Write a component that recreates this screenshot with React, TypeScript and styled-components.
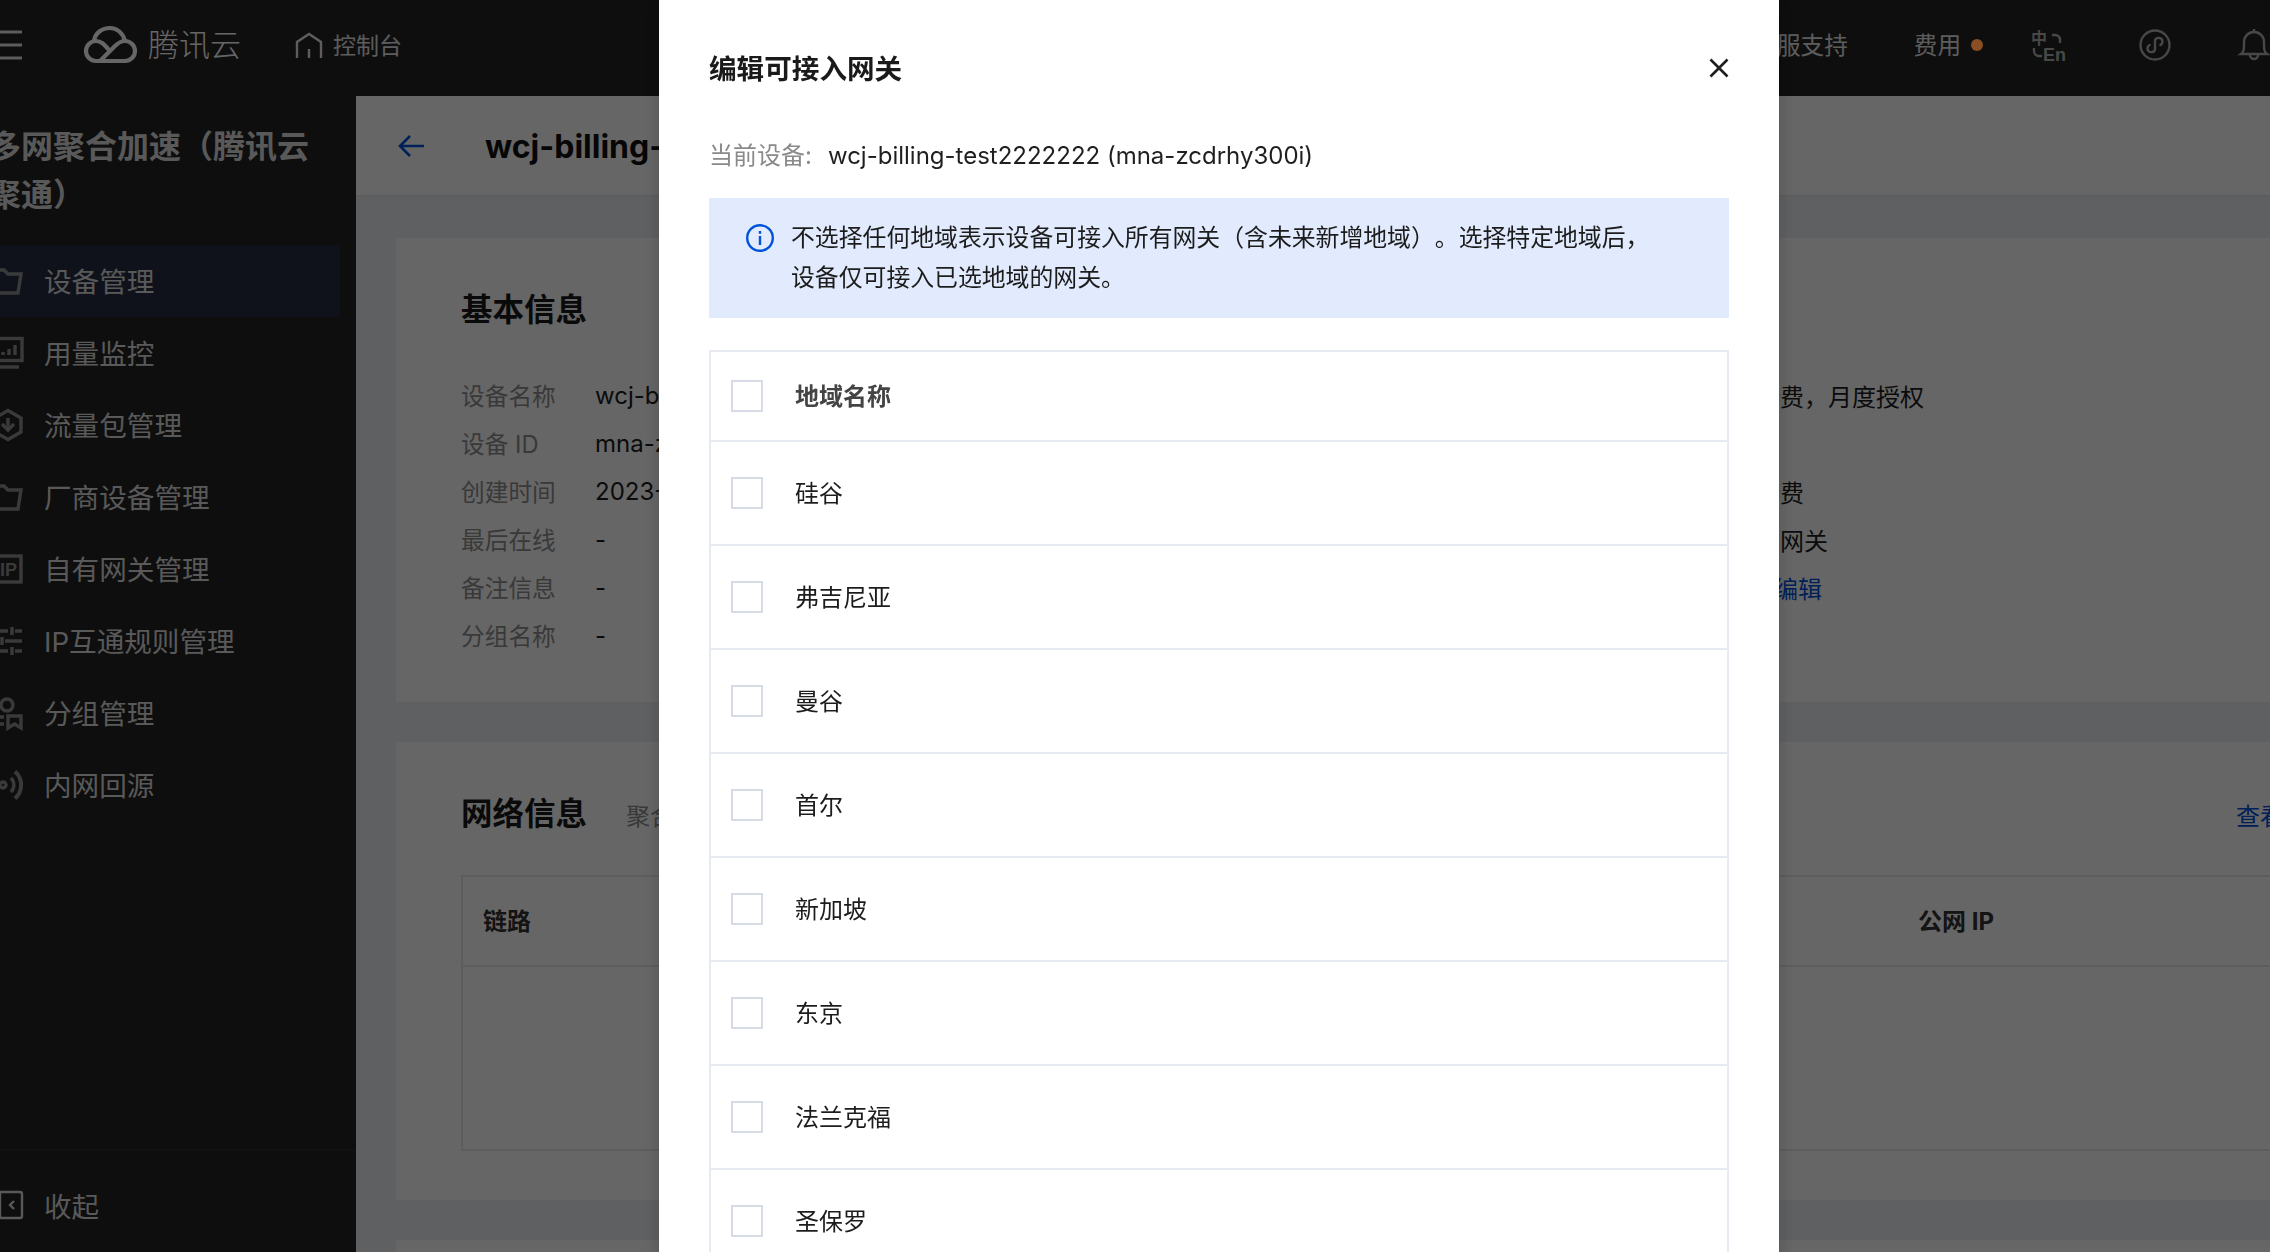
import React from "react";
import styled, { createGlobalStyle } from "styled-components";

const Global = createGlobalStyle`
  html, body { margin: 0; padding: 0; height: 100%; overflow: hidden; background: #232323; }
  body { font-family: Inter, "Noto Sans CJK SC", sans-serif; text-spacing-trim: space-all; }
  * { box-sizing: border-box; }
  svg { overflow: visible; }
`;

const Shell = styled.div`
  width: 2296px;
  height: 1252px;
  margin-left: -24px;
  display: flex;
  flex-direction: column;
  overflow: hidden;
`;

const TopBar = styled.header`
  flex: none;
  height: 96px;
  display: flex;
  align-items: center;
  padding: 0 3px 6px 14px;
  background: #232323;
  color: #fff;
`;

const Brand = styled.span`
  margin-left: 10px;
  font-size: 31px;
  font-weight: 300;
  line-height: 40px;
`;

const HomeLink = styled.span`
  margin: -2px 0 0 10px;
  font-size: 23px;
  color: #e6e6e6;
`;

const TopRight = styled.div`
  margin-left: auto;
  display: flex;
  align-items: center;
`;

const TopText = styled.span<{ $gap?: number }>`
  font-size: 23.6px;
  color: #e6e6e6;
  margin: -3px 0 0 ${(p) => p.$gap ?? 0}px;
`;

const Dot = styled.i`
  position: relative;
  z-index: 1100;
  width: 12px;
  height: 12px;
  margin-left: 10px;
  border-radius: 50%;
  background: #8a4f22;
`;

const IconSlot = styled.span<{ $gap: number }>`
  display: flex;
  margin-left: ${(p) => p.$gap}px;
`;

const LogoSlot = styled.span`
  display: flex;
  margin-left: 62px;
`;

const HomeSlot = styled.span`
  display: flex;
  margin-left: 54px;
`;

const Body = styled.div`
  flex: 1;
  display: flex;
  min-height: 0;
`;

const Sidebar = styled.aside`
  flex: none;
  width: 380px;
  display: flex;
  flex-direction: column;
  background: #232323;
  color: #dedede;
`;

const SideTitle = styled.h2`
  width: 340px;
  margin: 27px 0 26px 13px;
  font-size: 32px;
  line-height: 48px;
  font-weight: 700;
`;

const Menu = styled.nav`
  display: flex;
  flex-direction: column;
  margin-right: 16px;
`;

const MenuItem = styled.a<{ $active?: boolean }>`
  height: 72px;
  display: flex;
  align-items: center;
  gap: 21px;
  padding-left: 15px;
  font-size: 27.6px;
  background: ${(p) => (p.$active ? "#262f43" : "transparent")};
`;

const MenuText = styled.span`
  margin-top: -2px;
`;

const SideFooter = styled.div`
  margin-top: auto;
  height: 103px;
  padding: 6px 0 0 15px;
  display: flex;
  align-items: center;
  gap: 21px;
  font-size: 27.6px;
  border-top: 2px solid #2d2d2d;
`;

const Main = styled.main`
  flex: 1;
  min-width: 0;
  background: #eef0f5;
`;

const PageHead = styled.div`
  height: 101px;
  display: flex;
  align-items: center;
  gap: 61px;
  padding-left: 42px;
  background: #fff;
  border-bottom: 2px solid #e6e8ee;
`;

const PageTitle = styled.h1`
  margin: 2px 0 0;
  font-size: 32px;
  font-weight: 700;
  color: #111;
  white-space: nowrap;
`;

const Cards = styled.div`
  display: flex;
  flex-direction: column;
  gap: 40px;
  padding: 41px 0 0 40px;
`;

const Card = styled.section<{ $height: number }>`
  height: ${(p) => p.$height}px;
  padding: 48px 0 0 65px;
  background: #fff;
`;

const CardTitle = styled.h3`
  margin: 0;
  font-size: 31.5px;
  line-height: 48px;
  font-weight: 700;
  color: #1a1a1a;
`;

const InfoGrid = styled.div`
  display: grid;
  grid-template-columns: 134px 964px 149px 1fr;
  grid-auto-rows: 48px;
  align-items: center;
  margin-top: 37px;
  font-size: 24px;
`;

const InfoLabel = styled.span`
  font-size: 23.7px;
  color: #8f8f8f;
`;

const InfoValue = styled.span`
  color: #1c1c1c;
  white-space: nowrap;
`;

const InfoLink = styled.a`
  margin-left: 18px;
  color: #0052d9;
`;

const SectionHead = styled.div`
  display: flex;
  align-items: center;
  gap: 39px;
  margin-right: -60px;
`;

const SectionNote = styled.span`
  font-size: 24px;
  color: #8f8f8f;
`;

const SectionLink = styled.a`
  margin-left: auto;
  font-size: 24px;
  color: #0052d9;
  white-space: nowrap;
`;

const DataTable = styled.div`
  margin-top: 37px;
  height: 276px;
  border: 2px solid #e6e8ee;
  border-right: 0;
`;

const DataHead = styled.div`
  height: 90px;
  display: grid;
  grid-template-columns: 480px 480px 475px 1fr;
  align-items: center;
  padding: 0 0 3px 20px;
  border-bottom: 2px solid #e6e8ee;
  font-size: 24px;
  font-weight: 700;
  color: #333;
`;

const Overlay = styled.div`
  position: fixed;
  inset: 0;
  z-index: 1000;
  padding-left: 659px;
  background: rgba(0, 0, 0, 0.6);
  overflow: hidden;
`;

const Modal = styled.div`
  width: 1120px;
  height: 1400px;
  padding: 48px 50px 0;
  background: #fff;
  box-shadow: 0 4px 16px rgba(0, 0, 0, 0.2);
`;

const ModalHead = styled.div`
  height: 40px;
  display: flex;
  align-items: center;
  justify-content: space-between;
`;

const ModalTitle = styled.h2`
  margin: -2px 0 0;
  font-size: 27.6px;
  font-weight: 700;
  color: #1a1a1a;
`;

const CloseButton = styled.span`
  display: flex;
`;

const DeviceLine = styled.div`
  margin-top: 50px;
  line-height: 36px;
  font-size: 24px;
  color: #1f1f1f;
`;

const DeviceLabel = styled.span`
  color: #8a8a8a;
  margin-right: 16px;
`;

const Alert = styled.div`
  margin-top: 24px;
  display: flex;
  gap: 17px;
  padding: 20px 37px;
  background: #e2ebfd;
  font-size: 23.85px;
  line-height: 40px;
  color: #1c1c1c;
`;

const AlertIcon = styled.span`
  flex: none;
  display: flex;
  margin-top: 6px;
`;

const AlertText = styled.span`
  white-space: nowrap;
`;

const RegionTable = styled.div`
  margin-top: 32px;
  border: 2px solid #e7eaf0;
  border-bottom: 0;
`;

const RegionRow = styled.label<{ $head?: boolean }>`
  height: ${(p) => (p.$head ? 90 : 104)}px;
  display: flex;
  align-items: center;
  gap: 32px;
  padding-left: 20px;
  font-size: 24px;
  font-weight: ${(p) => (p.$head ? 700 : 400)};
  color: ${(p) => (p.$head ? "#444" : "#1c1c1c")};
  border-bottom: 2px solid #e7eaf0;
`;

const RegionName = styled.span`
  margin-top: -3px;
`;

const Check = styled.span`
  flex: none;
  width: 32px;
  height: 32px;
  border: 2px solid #d6dbe5;
  background: #fff;
`;

const MIcon = ({ children, color = "#929292" }: { children: React.ReactNode; color?: string }) => (
  <svg width="32" height="32" viewBox="0 0 32 32" fill="none" stroke={color} strokeWidth="3.4">
    {children}
  </svg>
);

const Folder = () => (
  <MIcon>
    <path d="M2 5h11l4 4h13l-3 19H2z" />
  </MIcon>
);

const menu: { label: string; icon: React.ReactNode; active?: boolean }[] = [
  { label: "设备管理", icon: <Folder />, active: true },
  {
    label: "用量监控",
    icon: (
      <MIcon>
        <rect x="2" y="1.500" width="29" height="22" />
        <path d="M1 30h27" />
        <path d="M12 18v-3M18 18v-6M24 18V8" />
      </MIcon>
    ),
  },
  {
    label: "流量包管理",
    icon: (
      <MIcon>
        <path d="M17 1.500 30 9v14l-13 7.500L4 23V9z" />
        <path d="M17 9v11" />
        <path d="m11 15 6 6 6-6" />
      </MIcon>
    ),
  },
  { label: "厂商设备管理", icon: <Folder /> },
  {
    label: "自有网关管理",
    icon: (
      <MIcon>
        <rect x="2" y="3" width="28" height="26" />
        <text x="9" y="22.500" fontSize="18" fontWeight="700" fill="#929292" stroke="none" fontFamily="Liberation Sans">
          IP
        </text>
      </MIcon>
    ),
  },
  {
    label: "IP互通规则管理",
    icon: (
      <MIcon>
        <path d="M1 6h16M24 6h7M21 2v8" />
        <path d="M1 16h6M14 16h17M11 12v8" />
        <path d="M1 26h16M24 26h7M21 22v8" />
      </MIcon>
    ),
  },
  {
    label: "分组管理",
    icon: (
      <MIcon>
        <circle cx="16" cy="8" r="6" />
        <path d="M1 20h12M1 27h12" />
        <path d="M17 19h13v12l-6.500-4-6.500 4z" />
      </MIcon>
    ),
  },
  {
    label: "内网回源",
    icon: (
      <MIcon>
        <circle cx="12" cy="16" r="3" />
        <path d="M20 9a10 10 0 0 1 0 14" />
        <path d="M24 2.500a18 18 0 0 1 0 27" strokeWidth="4" />
      </MIcon>
    ),
  },
];

const regions = ["硅谷", "弗吉尼亚", "曼谷", "首尔", "新加坡", "东京", "法兰克福", "圣保罗"];

export default function App() {
  return (
    <>
      <Global />
      <Shell>
        <TopBar>
          <svg width="32" height="30" viewBox="0 0 32 30" stroke="#e8e8e8" strokeWidth="3">
            <path d="M0 2h32M0 15h32M0 28h32" />
          </svg>
          <LogoSlot>
            <svg width="54" height="38" viewBox="0 0 54 38" fill="none" stroke="#fff" strokeWidth="4.200">
              <path d="M12 35h29a10 10 0 0 0 0-20c-4 0-7 2-10 5L16 35" />
              <path d="M12 35a10 10 0 0 1 0-20c5 0 8 3 13 9" />
              <path d="M10 15C11 7 18 2 26 2c7 0 13 5 15 13" />
            </svg>
          </LogoSlot>
          <Brand>腾讯云</Brand>
          <HomeSlot>
            <svg width="28" height="26" viewBox="0 0 28 26" fill="none" stroke="#e8e8e8" strokeWidth="2.400">
              <path d="M2 26V10L14 2l12 8v16" />
              <path d="M14 17v9" />
            </svg>
          </HomeSlot>
          <HomeLink>控制台</HomeLink>
          <TopRight>
            <TopText>客服支持</TopText>
            <TopText $gap={66}>费用</TopText>
            <Dot />
            <IconSlot $gap={48}>
              <svg width="32" height="32" viewBox="0 0 32 32" fill="none" stroke="#b4b4b4" strokeWidth="2.400">
                <text x="0" y="15" fontSize="16" fontWeight="700" fill="#b4b4b4" stroke="none" fontFamily="Noto Sans CJK SC">
                  中
                </text>
                <text x="12" y="32" fontSize="18" fontWeight="700" fill="#b4b4b4" stroke="none" fontFamily="Liberation Sans">
                  En
                </text>
                <path d="M21 6h3a5 5 0 0 1 5 5v3" />
                <path d="M3 19v3a5 5 0 0 0 5 5h3" />
              </svg>
            </IconSlot>
            <IconSlot $gap={76}>
              <svg width="32" height="32" viewBox="0 0 32 32" fill="none" stroke="#b4b4b4" strokeWidth="2.400">
                <circle cx="16" cy="16" r="14.500" />
                <path d="M11.500 15.500c-2 .8-3 2.400-3 4a3.900 3.900 0 0 0 7.500 1.200v-9.400a3.900 3.900 0 0 1 7.500 1.200c0 1.600-1 3.200-3 4" />
              </svg>
            </IconSlot>
            <IconSlot $gap={68}>
              <svg width="30" height="34" viewBox="0 0 30 34" fill="none" stroke="#b4b4b4" strokeWidth="2.400">
                <path d="M15 1v3" />
                <path d="M2 26c3-2 3-5 3-12a10 10 0 0 1 20 0c0 7 0 10 3 12z" />
                <path d="M11 27a4 4 0 0 0 8 0" />
              </svg>
            </IconSlot>
          </TopRight>
        </TopBar>
        <Body>
          <Sidebar>
            <SideTitle>多网聚合加速（腾讯云聚通）</SideTitle>
            <Menu>
              {menu.map((m) => (
                <MenuItem key={m.label} $active={m.active}>
                  {m.icon}
                  <MenuText>{m.label}</MenuText>
                </MenuItem>
              ))}
            </Menu>
            <SideFooter>
              <MIcon color="#dedede">
                <rect x="2" y="3" width="29" height="26" rx="2" strokeWidth="2.400" />
                <path d="M9 3v26" strokeWidth="2.400" />
                <path d="m23 12-4 4 4 4" strokeWidth="2.400" />
              </MIcon>
              收起
            </SideFooter>
          </Sidebar>
          <Main>
            <PageHead>
              <svg width="26" height="24" viewBox="0 0 26 24" fill="none" stroke="#0052d9" strokeWidth="2.600">
                <path d="M26 12H2M12 2 2 12l10 10" />
              </svg>
              <PageTitle>wcj-billing-test2222222</PageTitle>
            </PageHead>
            <Cards>
              <Card $height={464}>
                <CardTitle>基本信息</CardTitle>
                <InfoGrid>
                  <InfoLabel>设备名称</InfoLabel>
                  <InfoValue>wcj-billing-test2222222</InfoValue>
                  <InfoLabel>计费模式</InfoLabel>
                  <InfoValue>流量计费，月度授权</InfoValue>
                  <InfoLabel>设备 ID</InfoLabel>
                  <InfoValue>mna-zcdrhy300i</InfoValue>
                  <InfoLabel>设备类型</InfoLabel>
                  <InfoValue></InfoValue>
                  <InfoLabel>创建时间</InfoLabel>
                  <InfoValue>2023-08-21 16:12:08</InfoValue>
                  <InfoLabel>付费方式</InfoLabel>
                  <InfoValue>按量计费</InfoValue>
                  <InfoLabel>最后在线</InfoLabel>
                  <InfoValue>-</InfoValue>
                  <InfoLabel>接入方式</InfoLabel>
                  <InfoValue>可接入网关</InfoValue>
                  <InfoLabel>备注信息</InfoLabel>
                  <InfoValue>-</InfoValue>
                  <InfoLabel>可接入网关</InfoLabel>
                  <InfoValue>
                    全部
                    <InfoLink>编辑</InfoLink>
                  </InfoValue>
                  <InfoLabel>分组名称</InfoLabel>
                  <InfoValue>-</InfoValue>
                </InfoGrid>
              </Card>
              <Card $height={458}>
                <SectionHead>
                  <CardTitle>网络信息</CardTitle>
                  <SectionNote>聚合链路信息</SectionNote>
                  <SectionLink>查看详情</SectionLink>
                </SectionHead>
                <DataTable>
                  <DataHead>
                    <span>链路</span>
                    <span>网卡</span>
                    <span>状态</span>
                    <span>公网 IP</span>
                  </DataHead>
                </DataTable>
              </Card>
              <Card $height={300} />
            </Cards>
          </Main>
        </Body>
      </Shell>
      <Overlay>
        <Modal>
          <ModalHead>
            <ModalTitle>编辑可接入网关</ModalTitle>
            <CloseButton>
              <svg width="20" height="20" viewBox="0 0 20 20" stroke="#1f1f1f" strokeWidth="2.600">
                <path d="m1.500 1.500 17 17M18.500 1.500l-17 17" />
              </svg>
            </CloseButton>
          </ModalHead>
          <DeviceLine>
            <DeviceLabel>当前设备:</DeviceLabel>
            wcj-billing-test2222222 (mna-zcdrhy300i)
          </DeviceLine>
          <Alert>
            <AlertIcon>
              <svg width="28" height="28" viewBox="0 0 28 28" fill="none" stroke="#0052d9" strokeWidth="2.400">
                <circle cx="14" cy="14" r="12.800" />
                <path d="M14 12v9" />
                <path d="M14 7v2.800" />
              </svg>
            </AlertIcon>
            <AlertText>
              不选择任何地域表示设备可接入所有网关（含未来新增地域）。选择特定地域后，
              <br />
              设备仅可接入已选地域的网关。
            </AlertText>
          </Alert>
          <RegionTable>
            <RegionRow $head>
              <Check />
              <RegionName>地域名称</RegionName>
            </RegionRow>
            {regions.map((r) => (
              <RegionRow key={r}>
                <Check />
                <RegionName>{r}</RegionName>
              </RegionRow>
            ))}
          </RegionTable>
        </Modal>
      </Overlay>
    </>
  );
}
